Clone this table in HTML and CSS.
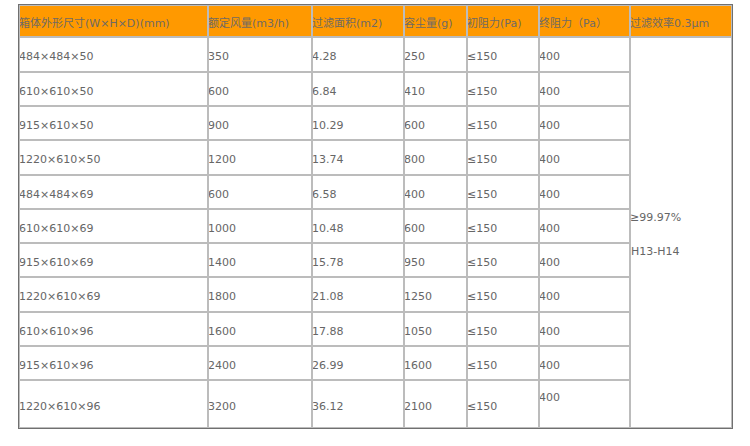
FILE: index.html
```html
<!DOCTYPE html>
<html>
<head>
<meta charset="utf-8">
<link rel="stylesheet" href="styles.css">
</head>
<body>
<table class="spec">
  <colgroup>
    <col class="c1"><col class="c2"><col class="c3"><col class="c4"><col class="c5"><col class="c6"><col class="c7">
  </colgroup>
  <thead>
    <tr class="head">
      <th>箱体外形尺寸(W×H×D)(mm)</th>
      <th>额定风量(m3/h)</th>
      <th>过滤面积(m2)</th>
      <th>容尘量(g)</th>
      <th>初阻力(Pa)</th>
      <th>终阻力（Pa）</th>
      <th>过滤效率0.3μm</th>
    </tr>
  </thead>
  <tbody>
    <tr class="r35"><td>484×484×50</td><td>350</td><td>4.28</td><td>250</td><td>≤150</td><td>400</td>
      <td class="eff" rowspan="11">≥99.97%<br><br>H13-H14</td></tr>
    <tr class="r34"><td>610×610×50</td><td>600</td><td>6.84</td><td>410</td><td>≤150</td><td>400</td></tr>
    <tr class="r34"><td>915×610×50</td><td>900</td><td>10.29</td><td>600</td><td>≤150</td><td>400</td></tr>
    <tr class="r35"><td>1220×610×50</td><td>1200</td><td>13.74</td><td>800</td><td>≤150</td><td>400</td></tr>
    <tr class="r34"><td>484×484×69</td><td>600</td><td>6.58</td><td>400</td><td>≤150</td><td>400</td></tr>
    <tr class="r34"><td>610×610×69</td><td>1000</td><td>10.48</td><td>600</td><td>≤150</td><td>400</td></tr>
    <tr class="r34"><td>915×610×69</td><td>1400</td><td>15.78</td><td>950</td><td>≤150</td><td>400</td></tr>
    <tr class="r35"><td>1220×610×69</td><td>1800</td><td>21.08</td><td>1250</td><td>≤150</td><td>400</td></tr>
    <tr class="r34"><td>610×610×96</td><td>1600</td><td>17.88</td><td>1050</td><td>≤150</td><td>400</td></tr>
    <tr class="r34"><td>915×610×96</td><td>2400</td><td>26.99</td><td>1600</td><td>≤150</td><td>400</td></tr>
    <tr class="last"><td>1220×610×96</td><td>3200</td><td>36.12</td><td>2100</td><td>≤150</td><td>400<br><br></td></tr>
  </tbody>
</table>
</body>
</html>
```

FILE: styles.css
```css
html, body {
  margin: 0;
  background: #ffffff;
}
body {
  padding: 4px 0 0 18px;
  font-family: "DejaVu Sans", "Noto Sans CJK SC", sans-serif;
  font-size: 11px;
  color: #666666;
}
.spec {
  table-layout: fixed;
  width: 713px;
  border-collapse: separate;
  border-spacing: 0;
  border: 1px solid #707070;
}
.c1 { width: 189px; }
.c2 { width: 104px; }
.c3 { width: 92px; }
.c4 { width: 63px; }
.c5 { width: 72px; }
.c6 { width: 91px; }
.c7 { width: 102px; }
.spec th, .spec td {
  border: 1px solid #bcbcbc;
  padding: 4px 0 0 0;
  text-indent: -1px;
  text-align: left;
  vertical-align: middle;
  font-weight: normal;
  white-space: nowrap;
  overflow: hidden;
  line-height: 17px;
}
.spec th {
  background: #ff9900;
  color: #6f6a64;
}
.head { height: 32px; }
.r34 { height: 34px; }
.r35 { height: 35px; }
.last { height: 48px; }
```
